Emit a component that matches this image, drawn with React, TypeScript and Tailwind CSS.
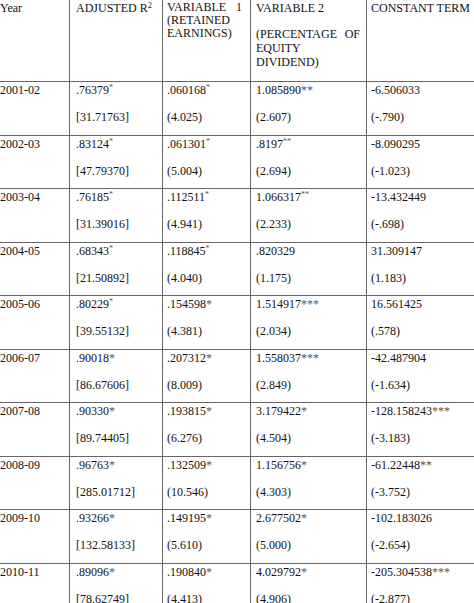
import React from "react"

type Cell = { v: string; star?: string; sup?: boolean; s: string }

type Row = { year: string; cells: Cell[] }

const rows: Row[] = [
    {
        year: "2001-02",
        cells: [
            { v: ".76379", star: "*", sup: true, s: "[31.71763]" },
            { v: ".060168", star: "*", sup: true, s: "(4.025)" },
            { v: "1.085890", star: "**", s: "(2.607)" },
            { v: "-6.506033", s: "(-.790)" },
        ],
    },
    {
        year: "2002-03",
        cells: [
            { v: ".83124", star: "*", sup: true, s: "[47.79370]" },
            { v: ".061301", star: "*", sup: true, s: "(5.004)" },
            { v: ".8197", star: "**", sup: true, s: "(2.694)" },
            { v: "-8.090295", s: "(-1.023)" },
        ],
    },
    {
        year: "2003-04",
        cells: [
            { v: ".76185", star: "*", sup: true, s: "[31.39016]" },
            { v: ".112511", star: "*", sup: true, s: "(4.941)" },
            { v: "1.066317", star: "**", sup: true, s: "(2.233)" },
            { v: "-13.432449", s: "(-.698)" },
        ],
    },
    {
        year: "2004-05",
        cells: [
            { v: ".68343", star: "*", sup: true, s: "[21.50892]" },
            { v: ".118845", star: "*", sup: true, s: "(4.040)" },
            { v: ".820329", s: "(1.175)" },
            { v: "31.309147", s: "(1.183)" },
        ],
    },
    {
        year: "2005-06",
        cells: [
            { v: ".80229", star: "*", sup: true, s: "[39.55132]" },
            { v: ".154598", star: "*", s: "(4.381)" },
            { v: "1.514917", star: "***", s: "(2.034)" },
            { v: "16.561425", s: "(.578)" },
        ],
    },
    {
        year: "2006-07",
        cells: [
            { v: ".90018", star: "*", s: "[86.67606]" },
            { v: ".207312", star: "*", s: "(8.009)" },
            { v: "1.558037", star: "***", s: "(2.849)" },
            { v: "-42.487904", s: "(-1.634)" },
        ],
    },
    {
        year: "2007-08",
        cells: [
            { v: ".90330", star: "*", s: "[89.74405]" },
            { v: ".193815", star: "*", s: "(6.276)" },
            { v: "3.179422", star: "*", s: "(4.504)" },
            { v: "-128.158243", star: "***", s: "(-3.183)" },
        ],
    },
    {
        year: "2008-09",
        cells: [
            { v: ".96763", star: "*", s: "[285.01712]" },
            { v: ".132509", star: "*", s: "(10.546)" },
            { v: "1.156756", star: "*", s: "(4.303)" },
            { v: "-61.22448", star: "**", s: "(-3.752)" },
        ],
    },
    {
        year: "2009-10",
        cells: [
            { v: ".93266", star: "*", s: "[132.58133]" },
            { v: ".149195", star: "*", s: "(5.610)" },
            { v: "2.677502", star: "*", s: "(5.000)" },
            { v: "-102.183026", s: "(-2.654)" },
        ],
    },
    {
        year: "2010-11",
        cells: [
            { v: ".89096", star: "*", s: "[78.62749]" },
            { v: ".190840", star: "*", s: "(4.413)" },
            { v: "4.029792", star: "*", s: "(4.906)" },
            { v: "-205.304538", star: "***", s: "(-2.877)" },
        ],
    },
]

const colPad = ["pl-[6px]", "pl-[4px] pr-[8px]", "pl-[5px] pr-[6px]", "pl-[4px]"]

const Value = ({ c }: { c: Cell }) => (
    <span>
        {c.v}
        {c.star && (c.sup
            ? <sup className="text-[8px] text-[#555]">{c.star}</sup>
            : <span className="text-[#555]">{c.star}</span>)}
    </span>
)

export default function App() {
    return (
        <div className="w-[474px] h-[603px] overflow-hidden bg-white text-[#111] text-[12px] leading-[14px]" style={{ fontFamily: '"Liberation Serif", "Times New Roman", serif' }}>
            <div className="grid grid-cols-[70px_93px_88px_116px_130px] w-[497px]">
                {/* header */}
                <div className="h-[82px] border-r border-b border-[#666] pt-[1px]">Year</div>
                <div className="h-[82px] border-r border-b border-[#666] pt-[1px] pl-[6px]">
                    ADJUSTED R<sup className="text-[8px]">2</sup>
                </div>
                <div className="h-[82px] border-r border-b border-[#666] pt-[1px] pl-[4px] pr-[8px] text-justify leading-[13px]">
                    VARIABLE 1 (RETAINED EARNINGS)
                </div>
                <div className="h-[82px] border-r border-b border-[#666] pt-[1px] pl-[5px] pr-[6px]">
                    <p>VARIABLE 2</p>
                    <p className="mt-[12px] text-justify">(PERCENTAGE OF EQUITY DIVIDEND)</p>
                </div>
                <div className="h-[82px] border-b border-[#666] pt-[1px] pl-[4px] whitespace-nowrap">CONSTANT TERM</div>

                {rows.map((r) => (
                    <React.Fragment key={r.year}>
                        <div className="h-[53.5px] border-r border-b border-[#666] pt-[1px]">{r.year}</div>
                        {r.cells.map((c, i) => (
                            <div key={i} className={`h-[53.5px] border-b border-[#666] pt-[1px] flex flex-col gap-[13px] whitespace-nowrap ${colPad[i]} ${i < 3 ? "border-r" : ""}`}>
                                <Value c={c} />
                                <span>{c.s}</span>
                            </div>
                        ))}
                    </React.Fragment>
                ))}
            </div>
        </div>
    )
}
